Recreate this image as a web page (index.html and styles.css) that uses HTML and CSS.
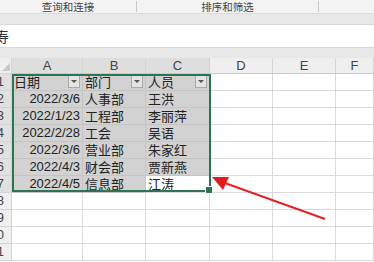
FILE: index.html
```html
<!DOCTYPE html>
<html>
<head>
<meta charset="utf-8">
<link rel="stylesheet" href="styles.css">
</head>
<body>
<div class="ribbon">
  <div class="group g1">查询和连接</div>
  <div class="group g2">排序和筛选</div>
  <div class="group g3"></div>
</div>
<div class="band"></div>
<div class="fbar"><span class="ftext">寿</span></div>
<div class="band band2"></div>
<div class="sheet">
  <div class="grid">
    <div class="corner"><svg width="12" height="16"><polygon points="10,5 10,13 2,13" fill="#c8c8c8"/></svg></div>
    <div class="ch sel">A</div><div class="ch sel">B</div><div class="ch sel">C</div><div class="ch">D</div><div class="ch">E</div><div class="ch">F</div>

    <div class="rh sel">1</div>
    <div class="c s hd"><span class="t">日期</span><span class="fb"></span></div>
    <div class="c s hd"><span class="t">部门</span><span class="fb"></span></div>
    <div class="c s hd"><span class="t">人员</span><span class="fb"></span></div>
    <div class="c"></div><div class="c"></div><div class="c"></div>

    <div class="rh sel">2</div>
    <div class="c s r">2022/3/6</div><div class="c s">人事部</div><div class="c s">王洪</div>
    <div class="c"></div><div class="c"></div><div class="c"></div>

    <div class="rh sel">3</div>
    <div class="c s r">2022/1/23</div><div class="c s">工程部</div><div class="c s">李丽萍</div>
    <div class="c"></div><div class="c"></div><div class="c"></div>

    <div class="rh sel">4</div>
    <div class="c s r">2022/2/28</div><div class="c s">工会</div><div class="c s">吴语</div>
    <div class="c"></div><div class="c"></div><div class="c"></div>

    <div class="rh sel">5</div>
    <div class="c s r">2022/3/6</div><div class="c s">营业部</div><div class="c s">朱家红</div>
    <div class="c"></div><div class="c"></div><div class="c"></div>

    <div class="rh sel">6</div>
    <div class="c s r">2022/4/3</div><div class="c s">财会部</div><div class="c s">贾新燕</div>
    <div class="c"></div><div class="c"></div><div class="c"></div>

    <div class="rh sel">7</div>
    <div class="c s r">2022/4/5</div><div class="c s">信息部</div><div class="c active">江涛</div>
    <div class="c"></div><div class="c"></div><div class="c"></div>

    <div class="rh">8</div>
    <div class="c"></div><div class="c"></div><div class="c"></div><div class="c"></div><div class="c"></div><div class="c"></div>
    <div class="rh">9</div>
    <div class="c"></div><div class="c"></div><div class="c"></div><div class="c"></div><div class="c"></div><div class="c"></div>
    <div class="rh">10</div>
    <div class="c"></div><div class="c"></div><div class="c"></div><div class="c"></div><div class="c"></div><div class="c"></div>
    <div class="rh">11</div>
    <div class="c"></div><div class="c"></div><div class="c"></div><div class="c"></div><div class="c"></div><div class="c"></div>
  </div>
  <div class="selbox"><span class="handle"></span></div>
  <svg class="arrow" width="374" height="204" viewBox="0 58 374 204">
    <line x1="325" y1="219" x2="222" y2="182" stroke="#e02424" stroke-width="2"/>
    <polygon points="212,177 229,177 223,190" fill="#e51c1c"/>
  </svg>
</div>
</body>
</html>
```
FILE: styles.css
```css
html, body {
  margin: 0;
  padding: 0;
  width: 374px;
  height: 262px;
  overflow: hidden;
  background: #ffffff;
  font-family: "Liberation Sans", "Noto Sans CJK SC", sans-serif;
}

.ribbon {
  display: flex;
  height: 14px;
  background: #f3f3f3;
  border-bottom: 1px solid #dcdcdc;
  box-sizing: border-box;
}
.group {
  font-family: "Noto Sans CJK SC", sans-serif;
  font-size: 10.5px;
  line-height: 11px;
  color: #444;
  text-align: center;
  border-right: 1px solid #c8c8c8;
  height: 11px;
  margin-top: 1px;
  box-sizing: border-box;
}
.g1 { width: 137px; }
.g2 { width: 182px; }
.g3 { flex: 1; border-right: none; }

.band {
  height: 10px;
  background: #e8e8e8;
}
.band2 { height: 10px; }

.fbar {
  height: 24px;
  background: #ffffff;
  border-top: 1px solid #d9d9d9;
  border-bottom: 1px solid #d9d9d9;
  box-sizing: border-box;
  overflow: hidden;
}
.ftext {
  display: block;
  margin-left: -5px;
  font-family: "Noto Sans CJK SC", sans-serif;
  font-size: 14px;
  line-height: 22px;
  color: #333;
}

.sheet {
  position: relative;
  width: 374px;
  overflow: hidden;
}
.grid {
  display: grid;
  grid-template-columns: 12px 71px 63px 64px 63px 63px 38px;
  grid-template-rows: 16px repeat(11, 17px);
  background: #ffffff;
}
.corner {
  background: #efefef;
  border-right: 1px solid #d4d4d4;
  border-bottom: 1px solid #d4d4d4;
  box-sizing: border-box;
  overflow: hidden;
}
.corner svg { display: block; }
.ch {
  background: #efefef;
  border-right: 1px solid #d4d4d4;
  border-bottom: 1px solid #c8c8c8;
  box-sizing: border-box;
  font-size: 13px;
  line-height: 16px;
  text-align: center;
  color: #444;
}
.ch.sel { background: #dedede; }
.rh {
  background: #efefef;
  border-right: 1px solid #d4d4d4;
  border-bottom: 1px solid #d4d4d4;
  box-sizing: border-box;
  font-size: 13px;
  line-height: 16px;
  color: #444;
  text-align: right;
  padding-right: 7px;
  overflow: hidden;
  white-space: nowrap;
  direction: rtl;
}
.rh.sel { background: #e0e0e0; }
.c {
  border-right: 1px solid #dadada;
  border-bottom: 1px solid #dadada;
  box-sizing: border-box;
  font-family: "Noto Sans CJK SC", sans-serif;
  font-size: 13px;
  line-height: 16px;
  color: #222;
  padding-left: 2px;
  white-space: nowrap;
  overflow: hidden;
}
.c.hd {
  display: flex;
  justify-content: space-between;
  align-items: flex-start;
  padding-right: 2px;
}
.c.r {
  font-family: "Liberation Sans", sans-serif;
  text-align: right;
  padding-left: 0;
  padding-right: 2px;
}
.c.s { background: #d2d2d2; border-color: #c4c4c4; }
.c.active { background: #ffffff; }
.fb {
  position: relative;
  margin-top: 1px;
  width: 12px;
  height: 13px;
  flex: none;
  background: #e4e4e4;
  border: 1px solid #a9a9a9;
  box-sizing: border-box;
}
.fb::after {
  content: "";
  position: absolute;
  left: 2px;
  top: 4px;
  border-left: 3px solid transparent;
  border-right: 3px solid transparent;
  border-top: 3px solid #555;
}

.selbox {
  position: absolute;
  left: 12px;
  top: 16px;
  width: 199px;
  height: 118px;
  border: 2px solid #2e7352;
  box-sizing: border-box;
}
.handle {
  position: absolute;
  right: -4px;
  bottom: -4px;
  width: 6px;
  height: 6px;
  background: #2e7352;
  border: 1px solid #fff;
}
.arrow {
  position: absolute;
  left: 0;
  top: 0;
}
```
